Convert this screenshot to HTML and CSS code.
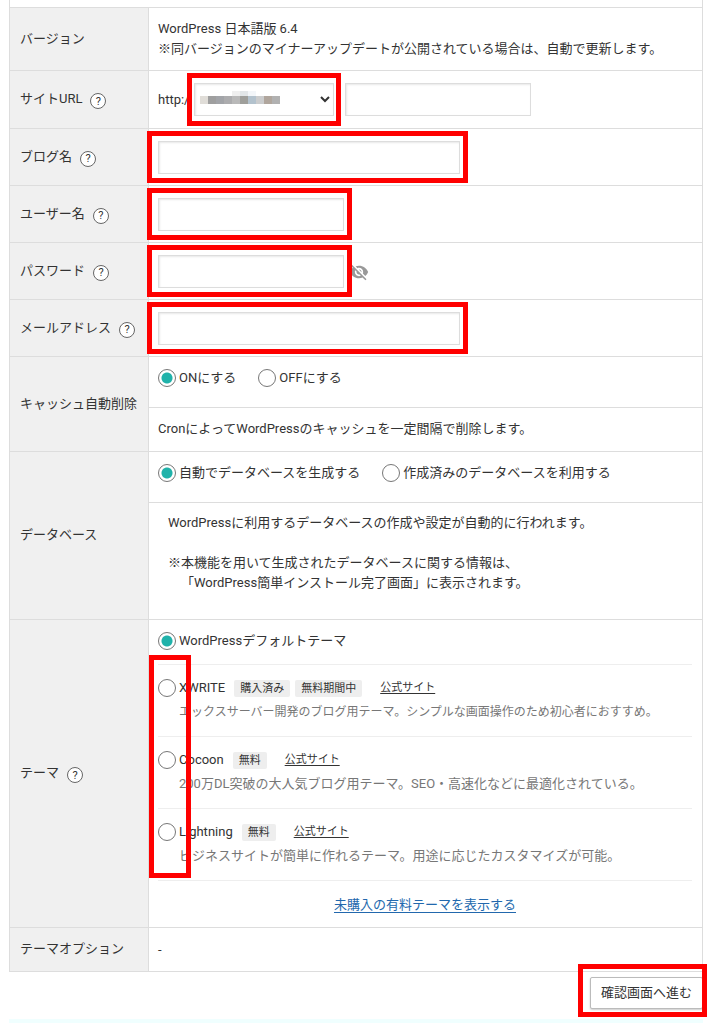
FILE: index.html
```html
<!DOCTYPE html>
<html lang="ja">
<head>
<meta charset="utf-8">
<meta name="viewport" content="width=device-width, initial-scale=1">
<title>WordPress簡単インストール</title>
<link rel="stylesheet" href="styles.css">
</head>
<body>
<form class="page">
  <table class="settings">
    <tbody>
      <tr>
        <td class="spacer" colspan="2"></td>
      </tr>
      <tr>
        <th scope="row">バージョン</th>
        <td class="cell">WordPress 日本語版 6.4<br>※同バージョンのマイナーアップデートが公開されている場合は、自動で更新します。</td>
      </tr>
      <tr>
        <th scope="row"><div class="label"><label for="path">サイトURL</label><button type="button" class="help" aria-label="サイトURLのヘルプ">?</button></div></th>
        <td class="cell cell-url">
          <div class="url">
            <span class="scheme">http://</span>
            <span class="mark mark-select">
              <select class="domain" aria-label="ドメイン"><option></option></select>
              <svg class="mosaic" width="80" height="13" viewBox="0 0 80 13" aria-hidden="true">
                <path fill="#efefef" d="M32 0h8v5h-8z"/><path fill="#e2e6e8" d="M40 0h8v5h-8z"/><path fill="#f3f6f9" d="M48 0h8v5h-8z"/>
                <path fill="#e0ddd8" d="M0 5h8v8H0z"/><path fill="#9f9f9f" d="M8 5h8v8H8z"/><path fill="#a2a4a8" d="M16 5h8v8h-8z"/><path fill="#acacae" d="M24 5h8v8h-8z"/><path fill="#b9b9b9" d="M32 5h8v8h-8z"/><path fill="#9f9f9b" d="M40 5h8v8h-8z"/><path fill="#b3c2cd" d="M48 5h8v8h-8z"/><path fill="#cbcccd" d="M56 5h8v8h-8z"/><path fill="#b0a69d" d="M64 5h8v8h-8z"/><path fill="#b1b1b1" d="M72 5h8v8h-8z"/>
              </svg>
            </span>
            <input class="field field-short" id="path" type="text">
          </div>
        </td>
      </tr>
      <tr>
        <th scope="row"><div class="label"><label for="blog">ブログ名</label><button type="button" class="help" aria-label="ブログ名のヘルプ">?</button></div></th>
        <td class="cell cell-field"><div class="row"><span class="mark"><input class="field field-long" id="blog" type="text"></span></div></td>
      </tr>
      <tr>
        <th scope="row"><div class="label"><label for="user">ユーザー名</label><button type="button" class="help" aria-label="ユーザー名のヘルプ">?</button></div></th>
        <td class="cell cell-field"><div class="row"><span class="mark"><input class="field field-short" id="user" type="text"></span></div></td>
      </tr>
      <tr>
        <th scope="row"><div class="label"><label for="pass">パスワード</label><button type="button" class="help" aria-label="パスワードのヘルプ">?</button></div></th>
        <td class="cell cell-field">
          <div class="row">
            <span class="mark"><input class="field field-short" id="pass" type="password"></span>
            <button type="button" class="eye" aria-label="パスワードを表示">
              <svg width="20" height="20" viewBox="0 0 24 24" aria-hidden="true"><path fill="#999" d="M12 7c2.76 0 5 2.24 5 5 0 .65-.13 1.26-.36 1.83l2.92 2.92c1.51-1.26 2.7-2.89 3.43-4.75-1.73-4.39-6-7.5-11-7.5-1.4 0-2.74.25-3.98.7l2.16 2.16C10.74 7.13 11.35 7 12 7zM2 4.27l2.28 2.28.46.46C3.08 8.3 1.78 10.02 1 12c1.73 4.39 6 7.5 11 7.5 1.55 0 3.03-.3 4.38-.84l.42.42L19.73 22 21 20.73 3.27 3 2 4.27zM7.53 9.8l1.55 1.55c-.05.21-.08.43-.08.65 0 1.66 1.34 3 3 3 .22 0 .44-.03.65-.08l1.55 1.55c-.67.33-1.41.53-2.2.53-2.76 0-5-2.24-5-5 0-.79.2-1.53.53-2.2zm4.31-.78l3.15 3.15.02-.16c0-1.66-1.34-3-3-3l-.17.01z"/></svg>
            </button>
          </div>
        </td>
      </tr>
      <tr>
        <th scope="row"><div class="label"><label for="mail">メールアドレス</label><button type="button" class="help" aria-label="メールアドレスのヘルプ">?</button></div></th>
        <td class="cell cell-field"><div class="row"><span class="mark"><input class="field field-long" id="mail" type="email"></span></div></td>
      </tr>
      <tr>
        <th scope="row">キャッシュ自動削除</th>
        <td>
          <div class="choices">
            <label class="choice"><input type="radio" name="cache" checked>ONにする</label>
            <label class="choice"><input type="radio" name="cache">OFFにする</label>
          </div>
          <p class="note">CronによってWordPressのキャッシュを一定間隔で削除します。</p>
        </td>
      </tr>
      <tr>
        <th scope="row">データベース</th>
        <td>
          <div class="choices">
            <label class="choice"><input type="radio" name="db" checked>自動でデータベースを生成する</label>
            <label class="choice"><input type="radio" name="db">作成済みのデータベースを利用する</label>
          </div>
          <div class="note note-wide">
            <p>WordPressに利用するデータベースの作成や設定が自動的に行われます。</p>
            <p class="hang">※本機能を用いて生成されたデータベースに関する情報は、<br>「WordPress簡単インストール完了画面」に表示されます。</p>
          </div>
        </td>
      </tr>
      <tr>
        <th scope="row"><div class="label">テーマ<button type="button" class="help" aria-label="テーマのヘルプ">?</button></div></th>
        <td>
          <div class="themes">
            <div class="theme-default"><label class="choice"><input type="radio" name="theme" checked>WordPressデフォルトテーマ</label></div>
            <ul class="theme-list">
              <li class="theme">
                <div class="theme-head">
                  <label class="choice"><input type="radio" name="theme">XWRITE</label>
                  <span class="badges"><span class="badge">購入済み</span><span class="badge">無料期間中</span></span>
                  <a class="site" href="#">公式サイト</a>
                </div>
                <p class="desc desc-small">エックスサーバー開発のブログ用テーマ。シンプルな画面操作のため初心者におすすめ。</p>
              </li>
              <li class="theme">
                <div class="theme-head">
                  <label class="choice"><input type="radio" name="theme">Cocoon</label>
                  <span class="badges"><span class="badge">無料</span></span>
                  <a class="site" href="#">公式サイト</a>
                </div>
                <p class="desc">200万DL突破の大人気ブログ用テーマ。SEO・高速化などに最適化されている。</p>
              </li>
              <li class="theme">
                <div class="theme-head">
                  <label class="choice"><input type="radio" name="theme">Lightning</label>
                  <span class="badges"><span class="badge">無料</span></span>
                  <a class="site" href="#">公式サイト</a>
                </div>
                <p class="desc">ビジネスサイトが簡単に作れるテーマ。用途に応じたカスタマイズが可能。</p>
              </li>
            </ul>
            <div class="more"><a href="#">未購入の有料テーマを表示する</a></div>
          </div>
        </td>
      </tr>
      <tr>
        <th scope="row">テーマオプション</th>
        <td class="cell">-</td>
      </tr>
    </tbody>
  </table>
  <div class="actions"><span class="mark mark-button"><button type="submit" class="submit">確認画面へ進む</button></span></div>
  <div class="strip"></div>
</form>
</body>
</html>
```

FILE: styles.css
```css
*,
*::after {
  box-sizing: border-box;
}

body {
  margin: 0;
  background: #fff;
  color: #333;
  font: 13px/20px Roboto, "Noto Sans CJK JP", sans-serif;
}

p,
ul {
  margin: 0;
  padding: 0;
}

button,
input,
select {
  margin: 0;
  font: inherit;
  color: inherit;
}

.page {
  padding: 0 7px 0 9px;
}

/* Settings table */
.settings {
  width: 100%;
  border-spacing: 0;
  border-left: 1px solid #ddd;
  border-right: 1px solid #ddd;
}

.settings th,
.settings td {
  padding: 0;
  border-bottom: 1px solid #ddd;
}

.settings th {
  width: 139px;
  padding: 11px 0 12px 10px;
  border-right: 1px solid #ddd;
  background: #f0f0f0;
  font-weight: 400;
  text-align: left;
  white-space: nowrap;
}

.settings .spacer {
  height: 8px;
}

.settings .cell {
  padding: 11px 9px;
}

.settings .cell-url {
  padding: 12px 9px;
}

.settings .cell-field {
  padding: 12px 9px 11px;
}

.label {
  display: flex;
  align-items: flex-end;
  gap: 8px;
}

.help {
  width: 16px;
  height: 16px;
  padding: 0;
  border: 1px solid #666;
  border-radius: 50%;
  background: #fff;
  font-size: 11px;
  line-height: 13px;
  text-align: center;
}

/* Text fields */
.row,
.url {
  display: flex;
  align-items: center;
  gap: 5px;
}

.url {
  gap: 4px;
}

.scheme {
  width: 32px;
  white-space: nowrap;
}

.field,
.domain {
  display: block;
  height: 33px;
  border: 1px solid #ddd;
  border-radius: 0;
  background: #fff;
  box-shadow: inset 1px 1px 2px #e8e8e8;
}

.field {
  padding: 0 8px;
}

.field-short {
  width: 186px;
}

.field-long {
  width: 302px;
}

.domain {
  width: 140px;
  padding: 0 2px;
}

.url .field {
  margin-left: 7px;
}

.mosaic {
  position: absolute;
  left: 6px;
  top: 8px;
}

.eye {
  display: flex;
  padding: 0;
  border: 0;
  background: none;
}

/* Red callout frames */
.mark {
  position: relative;
}

.mark::after,
.theme-list::after {
  content: "";
  position: absolute;
  inset: -10px -8px -9px -11px;
  border: 5px solid #f00;
  pointer-events: none;
}

.mark-select {
  box-shadow: 0 0 0 5px #fff;
}

.mark-select::after {
  inset: -10px -7px -10px -7px;
}

.mark-button::after {
  inset: -13px -4px -8px -12px;
}

/* Radio choices */
.choices {
  display: flex;
  gap: 22px;
  padding: 11px 9px 19px;
  border-bottom: 1px solid #ddd;
}

.choice {
  display: flex;
  align-items: center;
  gap: 3px;
}

.choice input {
  appearance: none;
  width: 18px;
  height: 18px;
  border: 1px solid #777;
  border-radius: 50%;
  background: #fff;
}

.choice input:checked {
  background: radial-gradient(circle, #20b2aa 5px, #fff 6px);
}

.note {
  padding: 11px 9px 12px;
}

.note-wide {
  display: grid;
  gap: 20px;
  padding: 10px 19px 26px;
}

.hang {
  padding-left: 13px;
  text-indent: -13px;
}

/* Themes */
.themes {
  padding: 0 10px 0 9px;
}

.theme-default {
  padding: 11px 0 13px;
  border-bottom: 1px solid #eee;
}

.theme-list {
  position: relative;
  list-style: none;
}

.theme-list::after {
  inset: -10px auto 3px -9px;
  width: 42px;
}

.theme {
  padding: 13px 0 14px;
  border-bottom: 1px solid #eee;
}

.theme-head {
  display: flex;
  align-items: center;
  gap: 9px;
  margin-bottom: 4px;
}

.badges {
  display: flex;
  gap: 5px;
}

.badge {
  padding: 0 6px;
  border-radius: 2px;
  background: #eee;
  font-size: 11px;
  line-height: 17px;
}

.site {
  margin-left: 9px;
  color: #333;
  font-size: 11px;
  text-underline-offset: 2px;
}

.desc {
  padding-left: 21px;
  color: #777;
}

.desc-small {
  font-size: 12px;
}

.more {
  padding: 14px 0 12px;
  text-align: center;
}

.more a {
  color: #2268ad;
  text-underline-offset: 3px;
}

/* Footer */
.actions {
  display: flex;
  justify-content: flex-end;
  padding: 5px 0 10px;
}

.submit {
  display: block;
  height: 32px;
  padding: 0 10px;
  border: 1px solid #bbb;
  border-radius: 2px;
  background: #fff;
  box-shadow: 0 1px 2px #ccc;
}

.strip {
  height: 5px;
  background: #f0ffff;
}
```
